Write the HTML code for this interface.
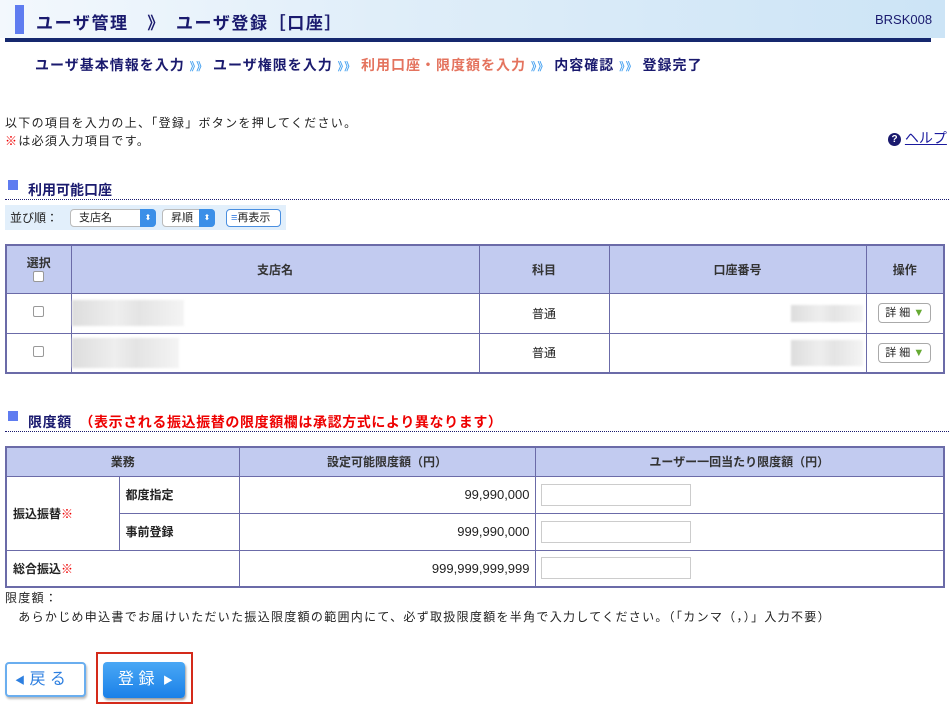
<!DOCTYPE html>
<html><head><meta charset="utf-8"><style>
*{box-sizing:border-box;margin:0;padding:0}
body{width:949px;height:706px;position:relative;background:#fff;font-family:"Liberation Sans","Noto Sans CJK JP",sans-serif;color:#222;font-size:12px;overflow:hidden}
.a{position:absolute;white-space:nowrap}
.hd{left:0;top:0;width:945px;height:38px;background:linear-gradient(90deg,#f3f8fd,#e0eef9 40%,#cce4f6)}
.nav{color:#1a1a6e;font-weight:bold;font-size:14px;letter-spacing:1px}
.sep{color:#4aa3f0;font-size:11px}
table{border-collapse:collapse;position:absolute;table-layout:fixed}
td,th{border:1px solid #6b6ba8;font-size:12px}
th{background:#c2cbf0;font-weight:bold;color:#333}
.cb{display:inline-block;width:11px;height:11px;border:1px solid #999;border-radius:2px;background:#fff}
.blur{display:inline-block;background:linear-gradient(90deg,#ddd,#eee 40%,#e4e4e4 60%,#f4f4f4);filter:blur(1px)}
.btn{display:inline-block;border:1px solid #aaa;border-radius:4px;background:#fff;font-size:11px;padding:0 6px;height:20px;line-height:18px}
.in{display:inline-block;width:150px;height:22px;border:1px solid #ccc;background:#fff}
.red{color:#e00}
.ls{letter-spacing:1.3px}
</style></head><body>
<div class="a hd"></div>
<div class="a" style="left:15px;top:5px;width:9px;height:29px;background:#5f7cf0"></div>
<div class="a" style="left:36px;top:9px;font-size:17px;font-weight:bold;color:#1a1a6e;letter-spacing:1.6px">ユーザ管理　》　ユーザ登録［口座］</div>
<div class="a" style="left:875px;top:12px;font-size:13px;color:#1a1a6e">BRSK008</div>
<div class="a" style="left:5px;top:38px;width:926px;height:4px;background:#15286e"></div>
<div class="a nav" style="left:35px;top:55px">ユーザ基本情報を入力 <span class="sep">》》</span> ユーザ権限を入力 <span class="sep">》》</span> <span style="color:#e4735e">利用口座・限度額を入力</span> <span class="sep">》》</span> 内容確認 <span class="sep">》》</span> 登録完了</div>
<div class="a ls" style="left:5px;top:114px;line-height:18px">以下の項目を入力の上、「登録」ボタンを押してください。<br><span class="red">※</span>は必須入力項目です。</div>
<div class="a" style="left:888px;top:128px;font-size:14px;color:#1a1a9e"><span style="display:inline-block;width:13px;height:13px;border-radius:50%;background:#1a1a6e;color:#fff;font-size:10px;text-align:center;line-height:13px;font-weight:bold;vertical-align:1px">?</span> <span style="text-decoration:underline">ヘルプ</span></div>
<div class="a" style="left:8px;top:180px;width:10px;height:10px;background:#5f7cf0"></div>
<div class="a" style="left:28px;top:180px;font-size:14px;color:#1a1a6e;font-weight:bold">利用可能口座</div>
<div class="a" style="left:5px;top:199px;width:944px;border-top:1px dotted #1a1a6e"></div>
<div class="a" style="left:5px;top:205px;width:281px;height:25px;background:#e2effb"></div>
<div class="a" style="left:10px;top:209px;font-size:12px">並び順：</div>
<div class="a" style="left:70px;top:209px;width:86px;height:18px;border:1px solid #bbb;border-radius:4px;background:#fff;font-size:11px;padding-left:8px;line-height:17px">支店名<span style="position:absolute;right:-1px;top:-1px;width:16px;height:18px;background:#3b8fe8;border-radius:0 4px 4px 0;color:#fff;font-size:8px;text-align:center">⬍</span></div>
<div class="a" style="left:162px;top:209px;width:53px;height:18px;border:1px solid #bbb;border-radius:4px;background:#fff;font-size:11px;padding-left:8px;line-height:17px">昇順<span style="position:absolute;right:-1px;top:-1px;width:16px;height:18px;background:#3b8fe8;border-radius:0 4px 4px 0;color:#fff;font-size:8px;text-align:center">⬍</span></div>
<div class="a" style="left:226px;top:209px;width:55px;height:18px;border:1px solid #4a8fe0;border-radius:4px;background:#fff;font-size:11px;line-height:16px;padding-left:4px"><span style="color:#3b7fe0;font-weight:bold">≡</span>再表示</div>

<table style="left:5px;top:244px;width:940px;border:2px solid #6b6ba8">
<colgroup><col style="width:65px"><col style="width:408px"><col style="width:130px"><col style="width:257px"><col></colgroup>
<tr style="height:48px"><th>選択<br><span class="cb"></span></th><th>支店名</th><th>科目</th><th>口座番号</th><th>操作</th></tr>
<tr style="height:40px"><td style="text-align:center"><span class="cb"></span></td><td><span class="blur" style="width:112px;height:26px;vertical-align:middle"></span></td><td style="text-align:center">普通</td><td style="text-align:right;padding-right:3px"><span class="blur" style="width:72px;height:17px;vertical-align:middle"></span></td><td style="text-align:center"><span class="btn">詳 細 <span style="color:#6a3">▼</span></span></td></tr>
<tr style="height:40px"><td style="text-align:center"><span class="cb"></span></td><td><span class="blur" style="width:107px;height:30px;vertical-align:middle"></span></td><td style="text-align:center">普通</td><td style="text-align:right;padding-right:3px"><span class="blur" style="width:72px;height:26px;vertical-align:middle"></span></td><td style="text-align:center"><span class="btn">詳 細 <span style="color:#6a3">▼</span></span></td></tr>
</table>

<div class="a" style="left:8px;top:411px;width:10px;height:10px;background:#5f7cf0"></div>
<div class="a" style="left:28px;top:412px;font-size:14px;font-weight:bold;color:#1a1a6e;letter-spacing:0.6px">限度額　<span style="color:#e00">（表示される振込振替の限度額欄は承認方式により異なります）</span></div>
<div class="a" style="left:5px;top:431px;width:944px;border-top:1px dotted #1a1a6e"></div>

<table style="left:5px;top:446px;width:940px;border:2px solid #6b6ba8">
<colgroup><col style="width:113px"><col style="width:120px"><col style="width:296px"><col></colgroup>
<tr style="height:29px"><th colspan="2">業務</th><th>設定可能限度額（円）</th><th>ユーザー一回当たり限度額（円）</th></tr>
<tr style="height:37px"><td rowspan="2" style="padding-left:6px;font-weight:bold">振込振替<span class="red">※</span></td><td style="padding-left:6px;font-weight:bold">都度指定</td><td style="text-align:right;padding-right:5px;font-size:13px">99,990,000</td><td style="padding-left:5px"><span class="in" style="vertical-align:middle"></span></td></tr>
<tr style="height:37px"><td style="padding-left:6px;font-weight:bold">事前登録</td><td style="text-align:right;padding-right:5px;font-size:13px">999,990,000</td><td style="padding-left:5px"><span class="in" style="vertical-align:middle"></span></td></tr>
<tr style="height:37px"><td colspan="2" style="padding-left:6px;font-weight:bold">総合振込<span class="red">※</span></td><td style="text-align:right;padding-right:5px;font-size:13px">999,999,999,999</td><td style="padding-left:5px"><span class="in" style="vertical-align:middle"></span></td></tr>
</table>
<div class="a ls" style="left:5px;top:589px;line-height:19px">限度額：<br>　あらかじめ申込書でお届けいただいた振込限度額の範囲内にて、必ず取扱限度額を半角で入力してください。（「カンマ（，）」入力不要）</div>

<div class="a" style="left:5px;top:662px;width:81px;height:35px;border:2px solid #6aaeef;border-radius:4px;background:#fff;box-shadow:1px 2px 2px #bbb;color:#2d7fe0;font-size:16px;line-height:31px;padding-left:8px"><span style="font-size:10px">◀</span> 戻 る</div>
<div class="a" style="left:96px;top:652px;width:97px;height:52px;border:2px solid #d42a1a"></div>
<div class="a" style="left:103px;top:662px;width:82px;height:36px;border-radius:4px;background:linear-gradient(#4aa8f5,#1a80e8);box-shadow:1px 2px 2px #999;color:#fff;font-size:16px;line-height:36px;padding-left:15px">登 録 <span style="font-size:10px;margin-left:4px">▶</span></div>
</body></html>
